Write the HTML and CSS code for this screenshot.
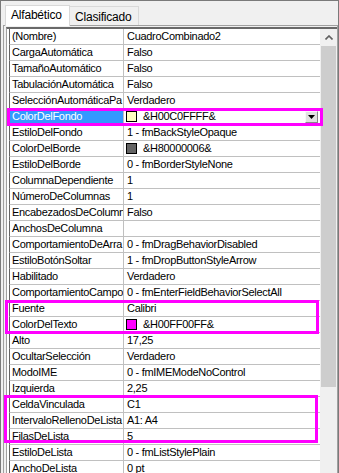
FILE: index.html
```html
<!DOCTYPE html>
<html>
<head>
  <meta charset="UTF-8" />
  <title>Propiedades</title>
  <link rel="stylesheet" href="styles.css">
</head>
<body>

<div class="window">
  <div class="tabs">
    <div class="tab active">Alfabético</div>
    <div class="tab">Clasificado</div>
  </div>

  <div class="panel">
    <div class="grid">
      <div class="rows">
        <div class="row"><div class="name">(Nombre)</div><div class="value">CuadroCombinado2</div></div>
        <div class="row"><div class="name">CargaAutomática</div><div class="value">Falso</div></div>
        <div class="row"><div class="name">TamañoAutomático</div><div class="value">Falso</div></div>
        <div class="row"><div class="name">TabulaciónAutomática</div><div class="value">Falso</div></div>
        <div class="row"><div class="name">SelecciónAutomáticaPa</div><div class="value">Verdadero</div></div>
        <div class="row selected">
          <div class="name">ColorDelFondo</div>
          <div class="value"><span class="swatch" style="background:#ffffc0"></span>&amp;H00C0FFFF&amp;<span class="drop"><svg width="7" height="4" viewBox="0 0 7 4"><path d="M0 0H7L3.5 4Z" fill="#000"/></svg></span></div>
        </div>
        <div class="row"><div class="name">EstiloDelFondo</div><div class="value">1 - fmBackStyleOpaque</div></div>
        <div class="row"><div class="name">ColorDelBorde</div><div class="value"><span class="swatch" style="background:#646464"></span>&amp;H80000006&amp;</div></div>
        <div class="row"><div class="name">EstiloDelBorde</div><div class="value">0 - fmBorderStyleNone</div></div>
        <div class="row"><div class="name">ColumnaDependiente</div><div class="value">1</div></div>
        <div class="row"><div class="name">NúmeroDeColumnas</div><div class="value">1</div></div>
        <div class="row"><div class="name">EncabezadosDeColumn</div><div class="value">Falso</div></div>
        <div class="row"><div class="name">AnchosDeColumna</div><div class="value"></div></div>
        <div class="row"><div class="name">ComportamientoDeArra</div><div class="value">0 - fmDragBehaviorDisabled</div></div>
        <div class="row"><div class="name">EstiloBotónSoltar</div><div class="value">1 - fmDropButtonStyleArrow</div></div>
        <div class="row"><div class="name">Habilitado</div><div class="value">Verdadero</div></div>
        <div class="row"><div class="name">ComportamientoCampo</div><div class="value">0 - fmEnterFieldBehaviorSelectAll</div></div>
        <div class="row"><div class="name">Fuente</div><div class="value">Calibri</div></div>
        <div class="row"><div class="name">ColorDelTexto</div><div class="value"><span class="swatch" style="background:#ff00ff"></span>&amp;H00FF00FF&amp;</div></div>
        <div class="row"><div class="name">Alto</div><div class="value">17,25</div></div>
        <div class="row"><div class="name">OcultarSelección</div><div class="value">Verdadero</div></div>
        <div class="row"><div class="name">ModoIME</div><div class="value">0 - fmIMEModeNoControl</div></div>
        <div class="row"><div class="name">Izquierda</div><div class="value">2,25</div></div>
        <div class="row"><div class="name">CeldaVinculada</div><div class="value">C1</div></div>
        <div class="row"><div class="name">IntervaloRellenoDeLista</div><div class="value">A1: A4</div></div>
        <div class="row"><div class="name">FilasDeLista</div><div class="value">5</div></div>
        <div class="row"><div class="name">EstiloDeLista</div><div class="value">0 - fmListStylePlain</div></div>
        <div class="row"><div class="name">AnchoDeLista</div><div class="value">0 pt</div></div>
      </div>
      <div class="scrollbar">
        <div class="arrow"><svg width="8" height="5" viewBox="0 0 8 5"><path d="M0.5 4.5L4 1L7.5 4.5" fill="none" stroke="#606060" stroke-width="1.6"/></svg></div>
        <div class="thumb"></div>
      </div>
    </div>
  </div>
</div>

<!-- highlight boxes drawn over the grid -->
<div class="mark mark-fondo"></div>
<div class="mark mark-fuente"></div>
<div class="mark mark-lista"></div>

</body>
</html>
```

FILE: styles.css
```css
body { margin: 0; background: #fff; font-family: "Liberation Sans", Arial, sans-serif; font-size: 11px; color: #000; }

.window { width: 339px; height: 473px; box-sizing: border-box; border: 1px solid #7a7a7a; border-bottom: none; background: #f0f0f0; overflow: hidden; }

.tabs { display: flex; align-items: flex-end; height: 24px; padding-left: 4px; }
.tab { width: 58px; height: 18px; padding: 0 5px; border: 1px solid #d9d9d9; border-bottom: none; background: #f0f0f0; font-size: 12px; line-height: 20px; letter-spacing: -0.2px; color: #000; }
.tab.active { height: 20px; width: 53px; background: #fff; line-height: 19px; padding: 0 5px; position: relative; top: 1px; margin-right: -1px; }

.panel { margin-left: 2px; border-left: 1px solid #a0a0a0; border-right: 1px solid #a0a0a0; border-top: 1px solid #a0a0a0; padding: 1px 0 0 2px; }
.grid { display: flex; border-top: 2px solid #696969; border-left: 1px solid #a0a0a0; height: 460px; }

.rows { flex: 1; background: #fff; border-left: 2px solid #fff; }
.row { display: flex; height: 15px; border-bottom: 1px solid #c0c0c0; border-left: 1px solid #646464; line-height: 15px; white-space: nowrap; letter-spacing: -0.3px; }
.name { width: 111px; padding-left: 2px; border-right: 1px solid #c0c0c0; overflow: hidden; }
.value { flex: 1; display: flex; align-items: center; padding-left: 3px; overflow: hidden; }
.selected .name { background: #3399ff; color: #fff; }

.swatch { width: 9px; height: 9px; border: 1px solid #000; margin: 0 6px 0 -1px; }
.drop { margin-left: auto; margin-right: 2px; width: 13px; height: 12px; box-sizing: border-box; background: #e1e1e1; border: 1px solid #f8f8f8; border-right-color: #888; border-bottom-color: #888; display: flex; align-items: center; justify-content: center; }
.drop svg { display: block; }

.scrollbar { width: 17px; background: #f0f0f0; }
.arrow { height: 17px; display: flex; align-items: center; justify-content: center; }
.arrow svg { display: block; }
.thumb { margin: 0 1px; height: 341px; background: #cdcdcd; }

.mark { position: absolute; border: 3px solid #ff00ff; box-sizing: border-box; }
.mark-fondo { left: 7px; top: 108px; width: 316px; height: 18px; }
.mark-fuente { left: 5px; top: 300px; width: 314px; height: 34px; }
.mark-lista { left: 4px; top: 395px; width: 314px; height: 48px; }
```
